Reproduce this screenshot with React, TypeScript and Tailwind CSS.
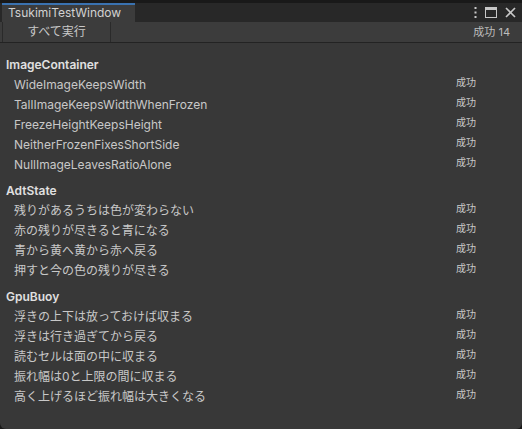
import React from 'react';

interface TestGroup {
    name: string;
    tests: string[];
}

const groups: TestGroup[] = [
    {
        name: 'ImageContainer',
        tests: [
            'WideImageKeepsWidth',
            'TallImageKeepsWidthWhenFrozen',
            'FreezeHeightKeepsHeight',
            'NeitherFrozenFixesShortSide',
            'NullImageLeavesRatioAlone',
        ],
    },
    {
        name: 'AdtState',
        tests: [
            '残りがあるうちは色が変わらない',
            '赤の残りが尽きると青になる',
            '青から黄へ黄から赤へ戻る',
            '押すと今の色の残りが尽きる',
        ],
    },
    {
        name: 'GpuBuoy',
        tests: [
            '浮きの上下は放っておけば収まる',
            '浮きは行き過ぎてから戻る',
            '読むセルは面の中に収まる',
            '振れ幅は0と上限の間に収まる',
            '高く上げるほど振れ幅は大きくなる',
        ],
    },
];

const font = { fontFamily: 'Inter, "Noto Sans CJK JP", sans-serif' };

const App: React.FC = () => {
    const total = groups.reduce((n, g) => n + g.tests.length, 0);

    return (
        <div className="w-[522px] h-[429px] bg-[#191919] pt-[3px] overflow-hidden" style={font}>
            <div className="h-[426px] flex flex-col bg-[#383838] rounded-b-[6px] overflow-hidden">
                {/* tab strip */}
                <div className="h-[19px] flex bg-[#282828]">
                    <div className="w-[133px] ml-[2px] bg-[#3c3c3c] border-t-2 border-[#3a72b0] text-[12px] leading-[16px] text-[#d2d2d2] pl-[6px]">
                        TsukimiTestWindow
                    </div>
                    <div className="flex-1" />
                    <div className="flex items-center gap-[8px] pr-[6px] text-[#c8c8c8]">
                        <svg width="3" height="11" viewBox="0 0 3 11" fill="currentColor">
                            <rect x="0.5" y="0" width="2" height="2" />
                            <rect x="0.5" y="4.5" width="2" height="2" />
                            <rect x="0.5" y="9" width="2" height="2" />
                        </svg>
                        <svg width="12" height="11" viewBox="0 0 12 11" fill="none" stroke="currentColor">
                            <rect x="0.5" y="0.5" width="11" height="10" />
                            <line x1="0.5" y1="2" x2="11.5" y2="2" strokeWidth="2" />
                        </svg>
                        <svg width="11" height="11" viewBox="0 0 11 11" stroke="currentColor" strokeWidth="1.6">
                            <line x1="1" y1="1" x2="10" y2="10" />
                            <line x1="10" y1="1" x2="1" y2="10" />
                        </svg>
                    </div>
                </div>

                {/* toolbar */}
                <div className="h-[21px] flex items-center bg-[#3c3c3c] border-b border-[#232323]">
                    <div className="ml-[2px] w-[109px] h-full border-x border-[#2a2a2a] text-center text-[12px] leading-[20px] text-[#c8c8c8]">
                        すべて実行
                    </div>
                    <div className="flex-1" />
                    <div className="pr-[12px] text-[11px] text-[#bdbdbd]">成功 {total}</div>
                </div>

                {/* results */}
                <div className="flex flex-col gap-[6px] pt-[12px]">
                    {groups.map((g) => (
                        <div key={g.name} className="flex flex-col">
                            <div className="h-[20px] pl-[6px] text-[12px] font-semibold leading-[20px] text-[#e0e0e0]">
                                {g.name}
                            </div>
                            {g.tests.map((t) => (
                                <div key={t} className="h-[20px] flex items-center">
                                    <div className="w-[456px] pl-[14px] text-[12px] text-[#c8c8c8]">{t}</div>
                                    <div className="-mt-[5px] text-[10px] text-[#c8c8c8]">成功</div>
                                </div>
                            ))}
                        </div>
                    ))}
                </div>
            </div>
        </div>
    );
};

export default App;
